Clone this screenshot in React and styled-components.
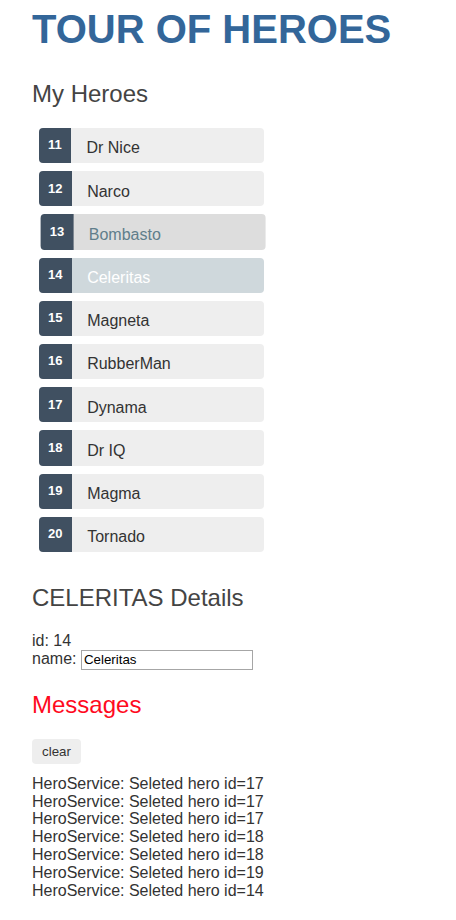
import React, { useState } from "react";
import styled, { createGlobalStyle, css } from "styled-components";

const HEROES = [
    { id: 11, name: "Dr Nice" },
    { id: 12, name: "Narco" },
    { id: 13, name: "Bombasto" },
    { id: 14, name: "Celeritas" },
    { id: 15, name: "Magneta" },
    { id: 16, name: "RubberMan" },
    { id: 17, name: "Dynama" },
    { id: 18, name: "Dr IQ" },
    { id: 19, name: "Magma" },
    { id: 20, name: "Tornado" },
];

const START_MESSAGES = [17, 17, 17, 18, 18, 19, 14].map(id => `HeroService: Seleted hero id=${id}`);

export default function App() {

    const [selectedId, setSelectedId] = useState(14);
    const [hoverId, setHoverId] = useState(13);
    const [messages, setMessages] = useState(START_MESSAGES);
    const [heroes, setHeroes] = useState(HEROES);

    const selected = heroes.find(h => h.id === selectedId);

    function select(hero) {
        setSelectedId(hero.id);
        setMessages([...messages, `HeroService: Seleted hero id=${hero.id}`]);
    }

    function rename(value) {
        setHeroes(heroes.map(h => h.id === selectedId ? { ...h, name: value } : h));
    }

    return (
        <Page>
            <GlobalStyle />
            <Title>TOUR OF HEROES</Title>

            <SectionTitle>My Heroes</SectionTitle>
            <HeroList>
                {heroes.map(hero => (
                    <HeroItem
                        key={hero.id}
                        $selected={hero.id === selectedId}
                        $hover={hero.id === hoverId}
                        onMouseEnter={() => setHoverId(hero.id)}
                        onMouseLeave={() => setHoverId(null)}
                        onClick={() => select(hero)}
                    >
                        <Badge>{hero.id}</Badge>
                        <HeroName>{hero.name}</HeroName>
                    </HeroItem>
                ))}
            </HeroList>

            {selected && (
                <Details>
                    <SectionTitle>{selected.name.toUpperCase()} Details</SectionTitle>
                    <Line>id: {selected.id}</Line>
                    <Line>
                        <label>name: <NameInput value={selected.name} onChange={e => rename(e.target.value)} placeholder="name" /></label>
                    </Line>
                </Details>
            )}

            <SectionTitle $color="#ff0a1e">Messages</SectionTitle>
            <ClearButton onClick={() => setMessages([])}>clear</ClearButton>
            {messages.map((m, i) => <Message key={i}>{m}</Message>)}
        </Page>
    )
}

const GlobalStyle = createGlobalStyle`

    body {
        margin: 0;
        background: #ffffff;
        color: #333333;
        font-family: "Liberation Sans", Arial, Helvetica, sans-serif;
    }

`

const Page = styled.div`

    padding: 6px 32px 16px;
    font-size: 16px;
    line-height: 18px;

`

const Title = styled.h1`

    margin: 0 0 28px;
    color: #336699;
    font-size: 40px;
    line-height: 46px;
    font-weight: bold;

`

const SectionTitle = styled.h2`

    margin: 20px 0;
    color: ${p => p.$color || "#444444"};
    font-size: 24px;
    line-height: 28px;
    font-weight: lighter;

`

const HeroList = styled.ul`

    list-style-type: none;
    margin: 0 0 32px 0;
    padding: 0;
    width: 240px;

`

const HeroItem = styled.li`

    display: flex;
    align-items: flex-start;
    box-sizing: border-box;
    height: 35.2px;
    margin: 8px;
    border-radius: 4px;
    background-color: #eeeeee;
    color: #333333;
    cursor: pointer;

    ${p => p.$hover && css`
        background-color: #dddddd;
        color: #607d8b;
        transform: translateX(1.6px);
    `}

    ${p => p.$selected && css`
        background-color: #cfd8dc;
        color: #ffffff;
    `}

`

const Badge = styled.span`

    display: block;
    box-sizing: border-box;
    height: 35.2px;
    margin-left: -1px;
    padding: 10.4px 9.1px 0;
    background-color: #405061;
    color: #ffffff;
    font-size: 13px;
    line-height: 13px;
    font-weight: bold;
    border-radius: 4px 0 0 4px;

`

const HeroName = styled.span`

    margin-left: 15.5px;
    padding-top: 11.4px;

`

const Details = styled.div`

    padding-bottom: 1px;

`

const Line = styled.div`

    color: #333333;

`

const Message = styled.div`

    color: #333333;
    line-height: 17.8px;

`

const NameInput = styled.input`

    box-sizing: border-box;
    width: 172px;
    height: 20px;
    padding: 1px 2px;
    border: 1px solid #a6a6a6;
    color: #000000;
    font-family: "Liberation Sans", Arial, sans-serif;
    font-size: 13.33px;
    outline: none;

`

const ClearButton = styled.button`

    display: block;
    margin-bottom: 11px;
    padding: 5px 10px;
    border: none;
    border-radius: 4px;
    background-color: #eeeeee;
    color: #333333;
    font-family: "Liberation Sans", Arial, sans-serif;
    font-size: 13.33px;
    cursor: pointer;

`
